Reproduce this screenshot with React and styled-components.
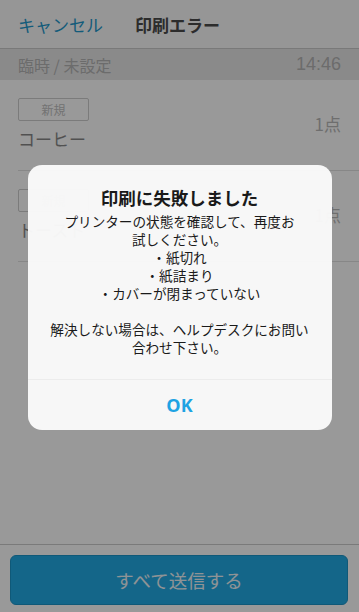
import React from "react";
import styled, { createGlobalStyle } from "styled-components";

const GlobalStyle = createGlobalStyle`
  html, body {
    margin: 0;
    padding: 0;
    height: 100%;
  }
  body {
    font-family: "Noto Sans CJK JP", "Noto Sans", sans-serif;
    background: #ffffff;
  }
  #root {
    height: 100%;
  }
`;

const Screen = styled.div`
  position: relative;
  height: 612px;
  display: flex;
  flex-direction: column;
  overflow: hidden;
  background: #ffffff;
`;

const Header = styled.div`
  height: 48px;
  display: flex;
  align-items: center;
  padding: 0 18px;
  gap: 32px;
  background: #fafafa;
  border-bottom: 1px solid #cacaca;
`;

const HeaderLink = styled.span`
  font-size: 17px;
  color: #1f98cc;
`;

const HeaderTitle = styled.span`
  font-size: 17px;
  font-weight: 700;
  color: #4a4a4a;
`;

const SubHeader = styled.div`
  height: 31px;
  display: flex;
  align-items: center;
  justify-content: space-between;
  padding: 0 18px;
  background: #e7e7e7;
  font-size: 16px;
  color: #b4b4b4;
`;

const Time = styled.span`
  font-family: "Liberation Sans", "Noto Sans", sans-serif;
  font-size: 18px;
`;

const List = styled.div`
  flex: 1;
  display: flex;
  flex-direction: column;
  padding-left: 18px;
`;

const Item = styled.div`
  display: flex;
  align-items: center;
  justify-content: space-between;
  padding: 18px 18px 19px 0;
  border-bottom: 1px solid #e2e2e2;
`;

const ItemMain = styled.div`
  display: flex;
  flex-direction: column;
  align-items: flex-start;
  gap: 5px;
`;

const Badge = styled.span`
  width: 69px;
  height: 21px;
  display: flex;
  align-items: center;
  justify-content: center;
  border: 1px solid #cdcdcd;
  border-radius: 2px;
  font-size: 12px;
  color: #c0c0c0;
`;

const ItemName = styled.span`
  font-size: 17px;
  color: #888888;
`;

const Count = styled.span`
  font-size: 17px;
  color: #b8b8b8;
  margin-bottom: 2px;
`;

const Footer = styled.div`
  border-top: 1px solid #cbcbcb;
  padding: 10px 11px 7px 10px;
`;

const SendButton = styled.button`
  width: 100%;
  height: 50px;
  border: 1px solid #1c94c8;
  border-radius: 6px;
  background: #22aae5;
  color: #eef6f9;
  font-family: inherit;
  font-size: 18.5px;
  padding: 0;
`;

const Overlay = styled.div`
  position: absolute;
  inset: 0;
  background: rgba(0, 0, 0, 0.4);
  display: flex;
  align-items: center;
  justify-content: center;
  padding-bottom: 18px;
  box-sizing: border-box;
`;

const Dialog = styled.div`
  width: 304px;
  border-radius: 14px;
  background: rgba(250, 250, 250, 0.97);
  display: flex;
  flex-direction: column;
  overflow: hidden;
`;

const DialogBody = styled.div`
  padding: 22px 12px 23px;
  text-align: center;
  color: #1a1a1a;
`;

const DialogTitle = styled.div`
  font-size: 17.5px;
  font-weight: 700;
  line-height: 22px;
  margin-bottom: 3px;
`;

const DialogMessage = styled.div`
  font-size: 13.6px;
  line-height: 18px;
  white-space: pre-line;
`;

const DialogAction = styled.div`
  height: 50px;
  border-top: 1px solid #ececec;
  display: flex;
  align-items: center;
  justify-content: center;
  font-size: 18px;
  font-weight: 700;
  color: #1ea3e3;
  font-family: "Open Sans", "Noto Sans", sans-serif;
`;

const items = [
  { name: "コーヒー", count: "1点" },
  { name: "トースト", count: "1点" },
];

const message =
  "プリンターの状態を確認して、再度お\n試しください。\n・紙切れ\n・紙詰まり\n・カバーが閉まっていない\n\n解決しない場合は、ヘルプデスクにお問い\n合わせ下さい。";

export default function App() {
  return (
    <>
      <GlobalStyle />
      <Screen>
        <Header>
          <HeaderLink>キャンセル</HeaderLink>
          <HeaderTitle>印刷エラー</HeaderTitle>
        </Header>
        <SubHeader>
          <span>臨時 / 未設定</span>
          <Time>14:46</Time>
        </SubHeader>
        <List>
          {items.map((item) => (
            <Item key={item.name}>
              <ItemMain>
                <Badge>新規</Badge>
                <ItemName>{item.name}</ItemName>
              </ItemMain>
              <Count>{item.count}</Count>
            </Item>
          ))}
        </List>
        <Footer>
          <SendButton>すべて送信する</SendButton>
        </Footer>
        <Overlay>
          <Dialog>
            <DialogBody>
              <DialogTitle>印刷に失敗しました</DialogTitle>
              <DialogMessage>{message}</DialogMessage>
            </DialogBody>
            <DialogAction>OK</DialogAction>
          </Dialog>
        </Overlay>
      </Screen>
    </>
  );
}
